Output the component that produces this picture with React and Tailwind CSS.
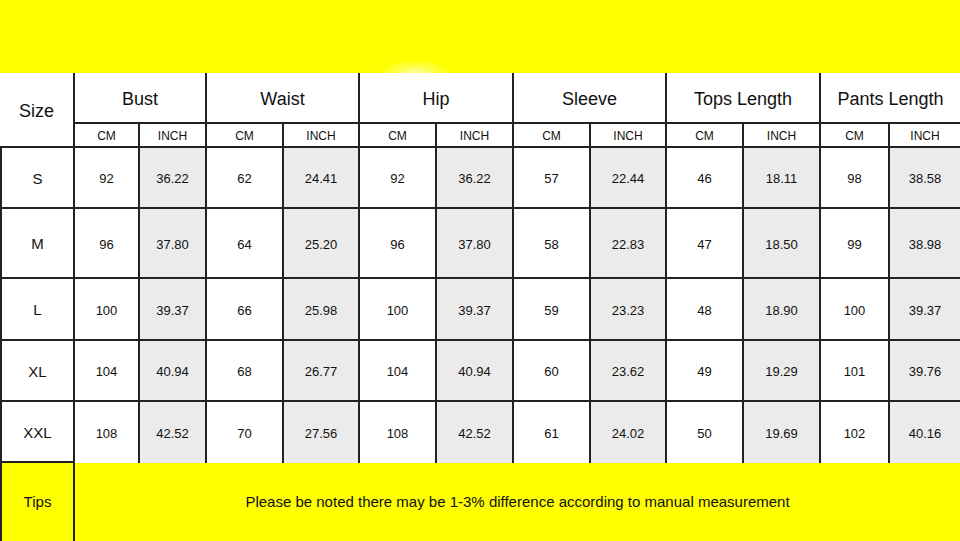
import React from 'react';

const groups = ['Bust', 'Waist', 'Hip', 'Sleeve', 'Tops Length', 'Pants Length'];

const rows = [
  { size: 'S', h: 'h-[61px]', vals: ['92', '36.22', '62', '24.41', '92', '36.22', '57', '22.44', '46', '18.11', '98', '38.58'] },
  { size: 'M', h: 'h-[70px]', vals: ['96', '37.80', '64', '25.20', '96', '37.80', '58', '22.83', '47', '18.50', '99', '38.98'] },
  { size: 'L', h: 'h-[62px]', vals: ['100', '39.37', '66', '25.98', '100', '39.37', '59', '23.23', '48', '18.90', '100', '39.37'] },
  { size: 'XL', h: 'h-[61px]', vals: ['104', '40.94', '68', '26.77', '104', '40.94', '60', '23.62', '49', '19.29', '101', '39.76'] },
  { size: 'XXL', h: 'h-[61px]', vals: ['108', '42.52', '70', '27.56', '108', '42.52', '61', '24.02', '50', '19.69', '102', '40.16'] },
];

const cols = 'grid grid-cols-[75px_65px_67px_77px_76px_77px_77px_77px_76px_77px_77px_69px_70px]';

export default function App() {
  return (
    <div className="w-[960px] h-[541px] overflow-hidden bg-white text-[#111] font-['Liberation_Sans',Arial,sans-serif]">
      <div className="h-[73px] bg-[#ffff00] bg-[radial-gradient(ellipse_36px_12px_at_415px_72px,#ffff90_0%,#ffff00_100%)]" />

      {/* header */}
      <div className={cols}>
        <div className="row-span-2 h-[75px] pt-[4px] border-r-2 border-b-2 border-[#222] flex items-center justify-center text-[18px]">
          Size
        </div>
        {groups.map((g, i) => (
          <div
            key={g}
            className={`col-span-2 h-[51px] pt-[3px] border-b-2 border-[#222] flex items-center justify-center text-[18px] ${i < groups.length - 1 ? 'border-r-2' : ''}`}
          >
            {g}
          </div>
        ))}
        {groups.flatMap((g, i) => [
          <div key={g + 'cm'} className="h-[24px] pt-[2px] border-r-2 border-b-2 border-[#222] flex items-center justify-center text-[12px]">
            CM
          </div>,
          <div
            key={g + 'in'}
            className={`h-[24px] pt-[2px] border-b-2 border-[#222] flex items-center justify-center text-[12px] ${i < groups.length - 1 ? 'border-r-2' : ''}`}
          >
            INCH
          </div>,
        ])}
      </div>

      {/* body */}
      {rows.map((r, ri) => {
        const last = ri === rows.length - 1;
        return (
          <div key={r.size} className={cols}>
            <div className={`${r.h} pt-[3px] border-l-2 border-r-2 border-b-2 border-[#222] flex items-center justify-center text-[15px]`}>
              {r.size}
            </div>
            {r.vals.map((v, vi) => (
              <div
                key={vi}
                className={`${r.h} pt-[3px] border-[#222] flex items-center justify-center text-[13px] ${vi % 2 ? 'bg-[#ebebeb]' : 'bg-white'} ${vi < 11 ? 'border-r-2' : ''} ${last ? '' : 'border-b-2'}`}
              >
                {v}
              </div>
            ))}
          </div>
        );
      })}

      {/* tips */}
      <div className="flex h-[78px] bg-[#ffff00]">
        <div className="w-[75px] border-l-2 border-r-2 border-[#222] flex items-center justify-center text-[15px]">
          Tips
        </div>
        <div className="flex-1 flex items-center justify-center text-[15px]">
          Please be noted there may be 1-3% difference according to manual measurement
        </div>
      </div>
    </div>
  );
}
